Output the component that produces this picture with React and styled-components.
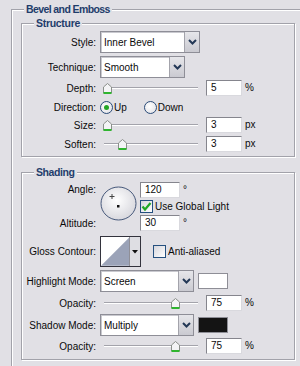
import React from "react";
import styled, { createGlobalStyle } from "styled-components";

/* Photoshop "Bevel and Emboss" layer-style panel */

const GlobalStyle = createGlobalStyle`
  body {
    margin: 0;
    background: #e1e0e5;
  }
`;

const Page = styled.div`
  width: 300px;
  height: 366px;
  overflow: hidden;
  box-sizing: border-box;
  padding-top: 9px;
  background: #e1e0e5;
  font-family: "Liberation Sans", Arial, sans-serif;
  font-size: 10px;
  color: #0a0a0a;
`;

// etched group box, title sits on the top line
const Group = styled.div`
  box-sizing: border-box;
  width: ${(props) => props.$width}px;
  margin: ${(props) => props.$mt || 0}px 0 0 ${(props) => props.$ml || 0}px;
  padding: 0 0 ${(props) => props.$pb || 0}px ${(props) => props.$pl || 0}px;
  border: 1px solid #a2a2aa;
  box-shadow: inset 1px 1px 0 #fff, 1px 1px 0 #fff;
`;

const GroupTitle = styled.div`
  display: table;
  margin: -7px 0 0 ${(props) => props.$ml}px;
  padding: 0 2px;
  line-height: 13px;
  background: #e1e0e5;
  color: #1f3d6b;
  font-weight: bold;
  font-size: 10.5px;
  letter-spacing: ${(props) => props.$ls || 0}px;
`;

const Row = styled.div`
  display: flex;
  align-items: center;
  height: ${(props) => props.$h}px;
  margin-top: ${(props) => props.$mt || 0}px;
`;

const Label = styled.div`
  flex-shrink: 0;
  width: 74px;
  margin-right: 4px;
  text-align: right;
  white-space: nowrap;
`;

const Select = styled.div`
  box-sizing: border-box;
  display: flex;
  width: ${(props) => props.$w}px;
  height: 22px;
  border: 1px solid #8e8e97;
  box-shadow: inset 1px 1px 0 #c9c9cf;
  background: #fff;
`;

const SelectValue = styled.div`
  flex: 1;
  display: flex;
  align-items: center;
  padding-left: 3px;
`;

const SelectButton = styled.div`
  width: 14px;
  display: flex;
  align-items: center;
  justify-content: center;
  border-left: 1px solid #a3a3ab;
  background: linear-gradient(#e6e6ea, #cacad1);
`;

const SliderBox = styled.div`
  position: relative;
  display: flex;
  align-items: center;
  width: 100px;
  height: 16px;
`;

const Track = styled.div`
  margin-left: 4px;
  width: 94px;
  height: 0;
  border-top: 1px solid #a3a3ab;
  border-bottom: 1px solid #fff;
`;

const Thumb = styled.svg`
  position: absolute;
  top: 3px;
`;

const NumBox = styled.div`
  box-sizing: border-box;
  width: ${(props) => props.$w || 36}px;
  height: 16px;
  margin-left: ${(props) => props.$ml ?? 6}px;
  padding-left: 4px;
  line-height: 14px;
  background: #fff;
  border: 1px solid;
  border-color: #85858d #d9d9de #d9d9de #85858d;
`;

const Unit = styled.span`
  margin-left: 3px;
  align-self: flex-start;
  margin-top: 2px;
`;

const RadioItem = styled.div`
  display: flex;
  align-items: center;
  margin-right: ${(props) => props.$mr || 0}px;
`;

const RadioDot = styled.div`
  box-sizing: border-box;
  width: 13px;
  height: 13px;
  border-radius: 50%;
  border: 1px solid #2a4b78;
  background: radial-gradient(circle at 40% 40%, #fff, #dcdce2);
  display: flex;
  align-items: center;
  justify-content: center;
  margin-right: 1px;

  &::after {
    content: "";
    display: ${(props) => (props.$on ? "block" : "none")};
    width: 5px;
    height: 5px;
    border-radius: 50%;
    background: #25a627;
  }
`;

const CheckBox = styled.div`
  box-sizing: border-box;
  width: 13px;
  height: 13px;
  border: 1px solid #25507f;
  background: linear-gradient(135deg, #d6d6dc, #fff);
  margin-right: 2px;
  display: flex;
  align-items: center;
  justify-content: center;
`;

const CheckRow = styled.div`
  display: flex;
  align-items: center;
  margin-left: ${(props) => props.$ml || 0}px;
  height: ${(props) => props.$h || 14}px;
`;

const AngleBlock = styled.div`
  display: grid;
  grid-template-columns: 74px 36px auto;
  grid-template-rows: 15px 14px 16px;
  column-gap: 4px;
  row-gap: 2px;
  margin-top: 3px;
`;

const BlockLabel = styled(Label)`
  grid-column: 1;
  grid-row: ${(props) => props.$row};
  margin: 0;
  align-self: center;
`;

const Dial = styled.svg`
  grid-column: 2;
  grid-row: 1 / 4;
  margin-top: 4px;
`;

const BlockCell = styled.div`
  grid-column: 3;
  grid-row: ${(props) => props.$row};
  display: flex;
  align-items: center;
`;

const Contour = styled.div`
  box-sizing: border-box;
  display: flex;
  width: 41px;
  height: 31px;
  border: 1px solid #33333d;
  background: #fff;
`;

const ContourArrow = styled.div`
  width: 10px;
  border-left: 1px solid #8f8f97;
  background: #dedee3;
  display: flex;
  align-items: center;
  justify-content: center;
`;

const Swatch = styled.div`
  box-sizing: border-box;
  width: 30px;
  height: 16px;
  margin-left: 4px;
  border: 1px solid #8e8e96;
  background: ${(props) => props.$color};
`;

const Chevron = () => (
  <svg width="9" height="6" viewBox="0 0 9 6">
    <polyline points="1,1 4.5,4.5 8,1" fill="none" stroke="#233856" strokeWidth="2" />
  </svg>
);

const Dropdown = ({ width, value }) => (
  <Select $w={width}>
    <SelectValue>{value}</SelectValue>
    <SelectButton>
      <Chevron />
    </SelectButton>
  </Select>
);

const Slider = ({ pos }) => (
  <SliderBox>
    <Track />
    <Thumb width="9" height="11" viewBox="0 0 9 11" style={{ left: pos }}>
      <polygon points="0.5,4 4.5,0.5 8.5,4 8.5,10 0.5,10" fill="#f4f4f6" stroke="#8a8f8a" />
      <line x1="0.5" y1="10" x2="8.5" y2="10" stroke="#2fb52f" strokeWidth="2" />
    </Thumb>
  </SliderBox>
);

const Check = () => (
  <svg width="11" height="11" viewBox="0 0 11 11">
    <polyline points="1.5,5.5 4,8.5 9.5,2" fill="none" stroke="#21a824" strokeWidth="2.2" />
  </svg>
);

const sliderRow = (label, value, unit, pos, h, mt) => (
  <Row $h={h} $mt={mt}>
    <Label>{label}</Label>
    <Slider pos={pos} />
    <NumBox>{value}</NumBox>
    <Unit>{unit}</Unit>
  </Row>
);

export default function App() {
  return (
    <Page>
      <GlobalStyle />
      <Group $width={300} $ml={11} $pl={9} $pb={10}>
        <GroupTitle $ml={3} $ls={-0.6}>
          Bevel and Emboss
        </GroupTitle>

        <Group $width={274} $mt={7} $pb={4}>
          <GroupTitle $ml={12} $ls={-0.3}>
            Structure
          </GroupTitle>
          <Row $h={22} $mt={1}>
            <Label>Style:</Label>
            <Dropdown width={100} value="Inner Bevel" />
          </Row>
          <Row $h={22} $mt={3}>
            <Label>Technique:</Label>
            <Dropdown width={85} value="Smooth" />
          </Row>
          {sliderRow("Depth:", "5", "%", 3, 16, 2)}
          <Row $h={20} $mt={1}>
            <Label>Direction:</Label>
            <RadioItem $mr={17}>
              <RadioDot $on />
              Up
            </RadioItem>
            <RadioItem>
              <RadioDot />
              Down
            </RadioItem>
          </Row>
          {sliderRow("Size:", "3", "px", 3, 16, 0)}
          {sliderRow("Soften:", "3", "px", 18, 16, 3)}
        </Group>

        <Group $width={274} $mt={15} $pb={5}>
          <GroupTitle $ml={12} $ls={-0.4}>
            Shading
          </GroupTitle>
          <AngleBlock>
            <BlockLabel $row={1}>Angle:</BlockLabel>
            <BlockLabel $row={3}>Altitude:</BlockLabel>
            <Dial width="37" height="35" viewBox="0 0 37 35">
              <defs>
                <radialGradient id="dialFill" cx="45%" cy="40%" r="60%">
                  <stop offset="0%" stopColor="#ffffff" />
                  <stop offset="100%" stopColor="#d8d8de" />
                </radialGradient>
              </defs>
              <ellipse cx="18.5" cy="17.5" rx="17.5" ry="16.5" fill="url(#dialFill)" stroke="#46587a" />
              <line x1="9.5" y1="10.5" x2="14.5" y2="10.5" stroke="#444" />
              <line x1="12" y1="8" x2="12" y2="13" stroke="#444" />
              <rect x="17" y="19" width="2.5" height="2.5" fill="#111" />
            </Dial>
            <BlockCell $row={1}>
              <NumBox $w={40} $ml={0}>120</NumBox>
              <Unit>°</Unit>
            </BlockCell>
            <BlockCell $row={2}>
              <CheckBox>
                <Check />
              </CheckBox>
              Use Global Light
            </BlockCell>
            <BlockCell $row={3}>
              <NumBox $w={40} $ml={0}>30</NumBox>
              <Unit>°</Unit>
            </BlockCell>
          </AngleBlock>

          <Row $h={31} $mt={5}>
            <Label>Gloss Contour:</Label>
            <Contour>
              <svg width="29" height="29" viewBox="0 0 29 29">
                <polygon points="0,29 29,0 29,29" fill="#9ba3b8" />
              </svg>
              <ContourArrow>
                <svg width="6" height="4" viewBox="0 0 6 4">
                  <polygon points="0,0 6,0 3,3.5" fill="#111" />
                </svg>
              </ContourArrow>
            </Contour>
            <CheckRow $ml={12} $h={14}>
              <CheckBox />
              Anti-aliased
            </CheckRow>
          </Row>

          <Row $h={22} $mt={3}>
            <Label>Highlight Mode:</Label>
            <Dropdown width={94} value="Screen" />
            <Swatch $color="#ffffff" />
          </Row>
          {sliderRow("Opacity:", "75", "%", 71, 16, 3)}
          <Row $h={22} $mt={3}>
            <Label>Shadow Mode:</Label>
            <Dropdown width={94} value="Multiply" />
            <Swatch $color="#141414" />
          </Row>
          {sliderRow("Opacity:", "75", "%", 71, 16, 2)}
        </Group>
      </Group>
    </Page>
  );
}
